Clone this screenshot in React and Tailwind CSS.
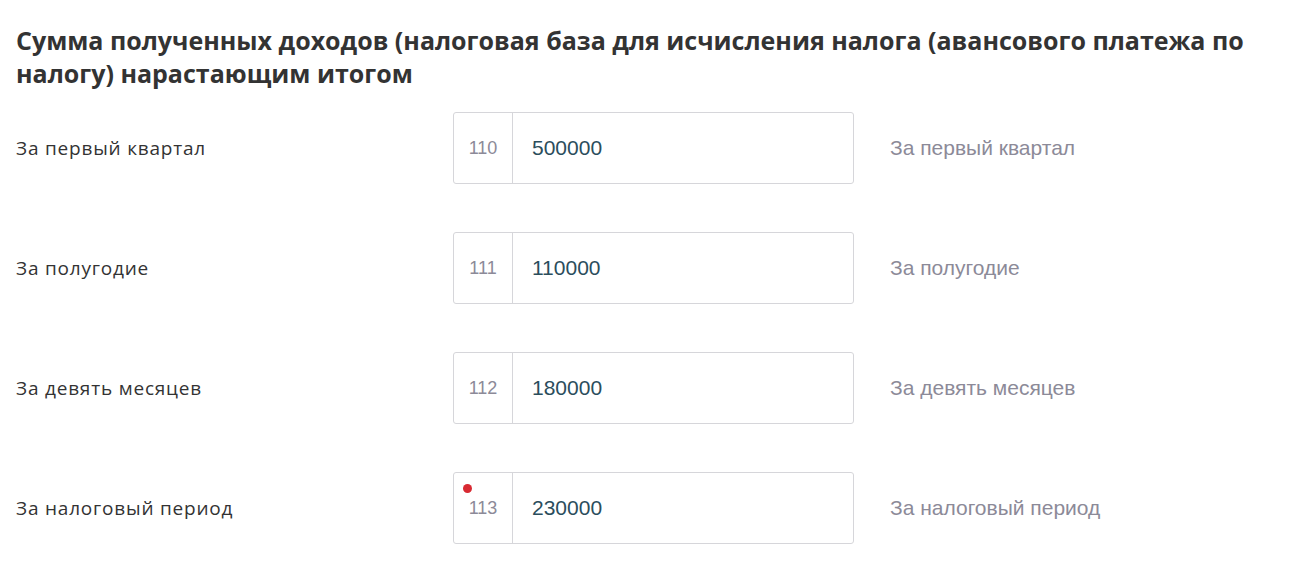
const rows = [
  { label: 'За первый квартал', code: '110', value: '500000' },
  { label: 'За полугодие', code: '111', value: '110000' },
  { label: 'За девять месяцев', code: '112', value: '180000' },
  { label: 'За налоговый период', code: '113', value: '230000', required: true },
]

function Row({ label, code, value, required }) {
  return (
    <div className="flex items-center h-[72px] mb-[48px]">
      <div className="w-[437px] text-[19px] tracking-[0.8px] font-medium text-[#333333] font-['Open_Sans',sans-serif]">{label}</div>
      <div className="w-[401px] h-[72px] flex border border-[#d6d6da] rounded-[3px] bg-white">
        <div className="relative w-[59px] border-r border-[#d6d6da] flex items-center justify-center text-[18px] text-[#8c8a98] font-['Liberation_Sans',sans-serif]">
          {required && <span className="absolute left-[9px] top-[11px] w-[9px] h-[9px] rounded-full bg-[#d82a32]" />}
          {code}
        </div>
        <div className="flex-1 flex items-center pl-[19px] text-[21px] text-[#2b4d5c] font-['Liberation_Sans',sans-serif]">{value}</div>
      </div>
      <div className="pl-[36px] text-[21px] text-[#8c8a98] font-['Liberation_Sans',sans-serif]">{label}</div>
    </div>
  )
}

export default function App() {
  return (
    <div className="bg-white min-h-[570px] pl-[16px] pt-[24px]">
      <h2 className="text-[25px] leading-[33px] font-bold text-[#333333] font-['Open_Sans',sans-serif] mb-[22px] max-w-[1250px]">
        Сумма полученных доходов (налоговая база для исчисления налога (авансового платежа по налогу) нарастающим итогом
      </h2>
      {rows.map((r) => <Row key={r.code} {...r} />)}
    </div>
  )
}
